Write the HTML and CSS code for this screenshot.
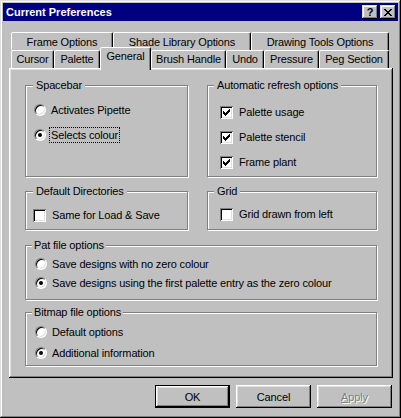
FILE: index.html
```html
<!DOCTYPE html>
<html>
<head>
<meta charset="utf-8">
<link rel="stylesheet" href="styles.css">
</head>
<body>
<div class="window">
  <div class="titlebar">
    <span class="title">Current Preferences</span>
    <div class="tb-btns">
      <span class="tbtn q">?</span>
      <span class="tbtn"><svg width="8" height="7" viewBox="0 0 8 7" shape-rendering="crispEdges"><path fill="#000" d="M0 0h2v1H0zM6 0h2v1H6zM1 1h2v1H1zM5 1h2v1H5zM2 2h4v1H2zM3 3h2v1H3zM2 4h4v1H2zM1 5h2v1H1zM5 5h2v1H5zM0 6h2v1H0zM6 6h2v1H6z"/></svg></span>
    </div>
  </div>

  <div class="tabs">
    <div class="tabrow back">
      <div class="tab">Frame Options</div>
      <div class="tab">Shade Library Options</div>
      <div class="tab">Drawing Tools Options</div>
    </div>
    <div class="tabrow front">
      <div class="tab">Cursor</div>
      <div class="tab">Palette</div>
      <div class="tab sel">General</div>
      <div class="tab">Brush Handle</div>
      <div class="tab">Undo</div>
      <div class="tab">Pressure</div>
      <div class="tab">Peg Section</div>
    </div>
  </div>

  <div class="panel">
    <div class="grow">
      <div class="group g-space">
        <span class="gtitle t-left">Spacebar</span>
        <div class="opt"><span class="radio"></span><span class="lbl">Activates Pipette</span></div>
        <div class="opt"><span class="radio on"></span><span class="lbl focus">Selects colour</span></div>
      </div>
      <div class="group g-auto">
        <span class="gtitle t-right">Automatic refresh options</span>
        <div class="opt"><span class="check"><svg width="7" height="7" viewBox="0 0 7 7" shape-rendering="crispEdges"><path fill="#000" d="M0 2h1v3H0zM1 3h1v3H1zM2 4h1v3H2zM3 3h1v3H3zM4 2h1v3H4zM5 1h1v3H5zM6 0h1v3H6z"/></svg></span><span class="lbl clbl">Palette usage</span></div>
        <div class="opt"><span class="check"><svg width="7" height="7" viewBox="0 0 7 7" shape-rendering="crispEdges"><path fill="#000" d="M0 2h1v3H0zM1 3h1v3H1zM2 4h1v3H2zM3 3h1v3H3zM4 2h1v3H4zM5 1h1v3H5zM6 0h1v3H6z"/></svg></span><span class="lbl clbl">Palette stencil</span></div>
        <div class="opt"><span class="check"><svg width="7" height="7" viewBox="0 0 7 7" shape-rendering="crispEdges"><path fill="#000" d="M0 2h1v3H0zM1 3h1v3H1zM2 4h1v3H2zM3 3h1v3H3zM4 2h1v3H4zM5 1h1v3H5zM6 0h1v3H6z"/></svg></span><span class="lbl clbl">Frame plant</span></div>
      </div>
    </div>

    <div class="grow row2">
      <div class="group g-dir">
        <span class="gtitle t-left">Default Directories</span>
        <div class="opt"><span class="check"></span><span class="lbl clbl">Same for Load &amp; Save</span></div>
      </div>
      <div class="group g-grid">
        <span class="gtitle t-right">Grid</span>
        <div class="opt"><span class="check"></span><span class="lbl clbl">Grid drawn from left</span></div>
      </div>
    </div>

    <div class="group g-pat">
      <span class="gtitle">Pat file options</span>
      <div class="opt"><span class="radio"></span><span class="lbl">Save designs with no zero colour</span></div>
      <div class="opt"><span class="radio on"></span><span class="lbl">Save designs using the first palette entry as the zero colour</span></div>
    </div>

    <div class="group g-bmp">
      <span class="gtitle">Bitmap file options</span>
      <div class="opt"><span class="radio"></span><span class="lbl">Default options</span></div>
      <div class="opt"><span class="radio on"></span><span class="lbl">Additional information</span></div>
    </div>
  </div>

  <div class="btns">
    <div class="btn def">OK</div>
    <div class="btn">Cancel</div>
    <div class="btn dis"><span><u>A</u>pply</span></div>
  </div>
</div>
</body>
</html>
```

FILE: styles.css
```css
* { box-sizing: border-box; }
html, body { margin: 0; padding: 0; }
body {
  font-family: "Liberation Sans", Arial, sans-serif;
  font-size: 11px;
  letter-spacing: -0.15px;
  color: #000;
  background: #c0c0c0;
}

.window {
  width: 401px;
  height: 418px;
  background: #c0c0c0;
  padding: 3px;
  display: flex;
  flex-direction: column;
  box-shadow: inset -1px -1px #000, inset 1px 1px #dfdfdf, inset -2px -2px #808080, inset 2px 2px #fff;
}

/* title bar */
.titlebar {
  height: 18px;
  background: #000080;
  color: #fff;
  display: flex;
  align-items: center;
  justify-content: space-between;
  padding: 0 2px 0 3px;
}
.title { font-weight: bold; font-size: 11px; letter-spacing: 0; }
.tb-btns { display: flex; gap: 2px; }
.tbtn {
  width: 16px;
  height: 14px;
  background: #c0c0c0;
  color: #000;
  display: flex;
  align-items: center;
  justify-content: center;
  box-shadow: inset -1px -1px #000, inset 1px 1px #dfdfdf, inset -2px -2px #808080, inset 2px 2px #fff;
}
.tbtn.q { font-weight: bold; font-size: 11px; line-height: 14px; }

/* tabs */
.tabs {
  margin: 11px 0 0 6px;
  width: 384px;
  padding-left: 2px;
}
.tabrow { display: grid; height: 18px; }
.back { grid-template-columns: 102px 138px 138px; }
.front { grid-template-columns: 43px 46px 51px 75px 38px 55px 70px; }
.tab {
  border-style: solid;
  border-width: 1px 1px 0 1px;
  border-color: #fff #000 transparent #fff;
  border-radius: 2px 2px 0 0;
  box-shadow: inset -1px 0 #808080;
  text-align: center;
  white-space: nowrap;
  line-height: 14px;
  padding-top: 2px;
  background: #c0c0c0;
}
.front .tab { padding-top: 1px; }
.front .tab.sel {
  position: relative;
  z-index: 2;
  margin-top: -3px;
  margin-bottom: -2px;
  padding-top: 1px;
}

/* panel */
.panel {
  margin-left: 6px;
  width: 384px;
  height: 310px;
  padding: 17px 16px 0 16px;
  display: flex;
  flex-direction: column;
  box-shadow: inset -1px -1px #000, inset 1px 1px #fff, inset -2px -2px #808080, inset 2px 2px #dfdfdf;
}

.grow { display: flex; gap: 19px; }
.row2 { margin-top: 14px; }

.group {
  position: relative;
  border: 1px solid #808080;
  box-shadow: inset 1px 1px #fff, 1px 1px #fff;
  display: flex;
  flex-direction: column;
}
.gtitle {
  position: absolute;
  top: -7px;
  left: 6px;
  padding: 0 2px;
  line-height: 13px;
  background: #c0c0c0;
  white-space: nowrap;
}
.gtitle.t-left { left: 7px; padding: 0 3px; }
.gtitle.t-right { left: 6px; padding: 0 3px; }

.g-space { width: 163px; height: 92px; padding: 16px 0 0 8px; gap: 9px; }
.g-auto { width: 170px; height: 92px; padding: 18px 0 0 12px; gap: 9px; }
.g-dir { width: 163px; height: 39px; padding: 15px 0 0 7px; }
.g-grid { width: 170px; height: 39px; padding: 14px 0 0 12px; }
.g-pat { width: 352px; height: 55px; margin-top: 15px; padding: 10px 0 0 9px; gap: 3px; }
.g-bmp { width: 352px; height: 54px; margin-top: 12px; padding: 11px 0 0 9px; gap: 5px; }

.opt { display: flex; align-items: center; height: 16px; }
.lbl { margin-left: 5px; white-space: nowrap; line-height: 14px; }
.clbl { margin-left: 6px; }
.focus { outline: 1px dotted #000; outline-offset: 0; padding: 0 1px; margin-left: 4px; }

.radio {
  position: relative;
  flex: none;
  width: 12px;
  height: 12px;
  border-radius: 50%;
  background: #fff;
  border: 1px solid;
  border-color: #808080 #fff #fff #808080;
  box-shadow: inset 1px 1px #000, inset -1px -1px #dfdfdf;
}
.radio.on::after {
  content: "";
  position: absolute;
  left: 3px;
  top: 3px;
  width: 4px;
  height: 4px;
  border-radius: 50%;
  background: #000;
}

.check {
  flex: none;
  width: 13px;
  height: 13px;
  background: #fff;
  display: flex;
  align-items: center;
  justify-content: center;
  box-shadow: inset 1px 1px #808080, inset -1px -1px #fff, inset 2px 2px #000, inset -2px -2px #dfdfdf;
}
.check svg { display: block; }

/* buttons */
.btns {
  display: flex;
  justify-content: flex-end;
  gap: 6px;
  margin-top: 7px;
  padding-right: 6px;
}
.btn {
  width: 75px;
  height: 23px;
  display: flex;
  align-items: center;
  justify-content: center;
  box-shadow: inset -1px -1px #000, inset 1px 1px #fff, inset -2px -2px #808080, inset 2px 2px #dfdfdf;
}
.btn.def {
  border: 1px solid #000;
  box-shadow: inset -1px -1px #000, inset 1px 1px #fff, inset -2px -2px #808080, inset 2px 2px #dfdfdf;
}
.btn.dis { color: #808080; text-shadow: 1px 1px #fff; }
```
